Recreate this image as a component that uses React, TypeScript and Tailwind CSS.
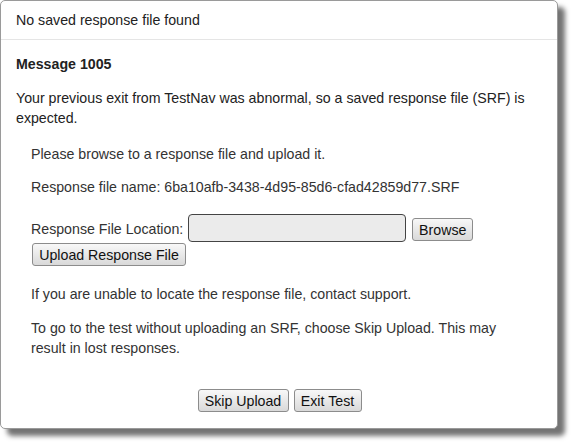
import React from "react";

function Btn({ children, className = "" }: { children: React.ReactNode; className?: string }) {
  return (
    <button
      className={
        "h-[23px] px-[6px] whitespace-nowrap rounded-[3px] border border-[#8c8c8c] bg-gradient-to-b from-[#f8f8f8] to-[#d9d9d9] text-[14.2px] leading-[20px] text-[#111] flex items-center justify-center " +
        className
      }
      style={{ fontFamily: '"Liberation Sans", Arial, sans-serif' }}
    >
      {children}
    </button>
  );
}

export default function App() {
  return (
    <div
      className="w-[574px] h-[445px] bg-white overflow-hidden text-[14.2px] leading-[20px] text-[#333]"
      style={{ fontFamily: '"Liberation Sans", Arial, sans-serif' }}
    >
      <div className="w-[558px] h-[429px] bg-white border border-[#9a9a9a] rounded-[5px] shadow-[7px_7px_5px_rgba(0,0,0,0.55)] flex flex-col">
        <div className="h-[39px] pt-[9px] px-[15px] border-b border-[#e5e5e5] text-[#222]">
          No saved response file found
        </div>
        <div className="px-[15px] pt-[14px] flex flex-col">
          <div className="font-bold text-[#222]">Message 1005</div>
          <p className="mt-[14px] text-[#222]">
            Your previous exit from TestNav was abnormal, so a saved response file (SRF) is expected.
          </p>
          <div className="ml-[15px] flex flex-col">
            <p className="mt-[16px]">Please browse to a response file and upload it.</p>
            <p className="mt-[13px]">Response file name: 6ba10afb-3438-4d95-85d6-cfad42859d77.SRF</p>
            <div className="mt-[17px] flex items-center">
              <span className="mt-[1px]">Response File Location:</span>
              <div className="ml-[5px] w-[218px] h-[28px] rounded-[4px] border border-[#444] bg-[#ebebeb]"></div>
              <Btn className="ml-[6px] mt-[3px] w-[61px]">Browse</Btn>
            </div>
            <div className="mt-[1px] flex">
              <Btn className="ml-[1px] w-[154px]">Upload Response File</Btn>
            </div>
            <p className="mt-[18px]">If you are unable to locate the response file, contact support.</p>
            <p className="mt-[14px] w-[480px]">
              To go to the test without uploading an SRF, choose Skip Upload. This may result in lost responses.
            </p>
          </div>
          <div className="mt-[31px] flex justify-center gap-[5px] pl-[1px]">
            <Btn className="w-[91px]">Skip Upload</Btn>
            <Btn className="w-[68px]">Exit Test</Btn>
          </div>
        </div>
      </div>
    </div>
  );
}
